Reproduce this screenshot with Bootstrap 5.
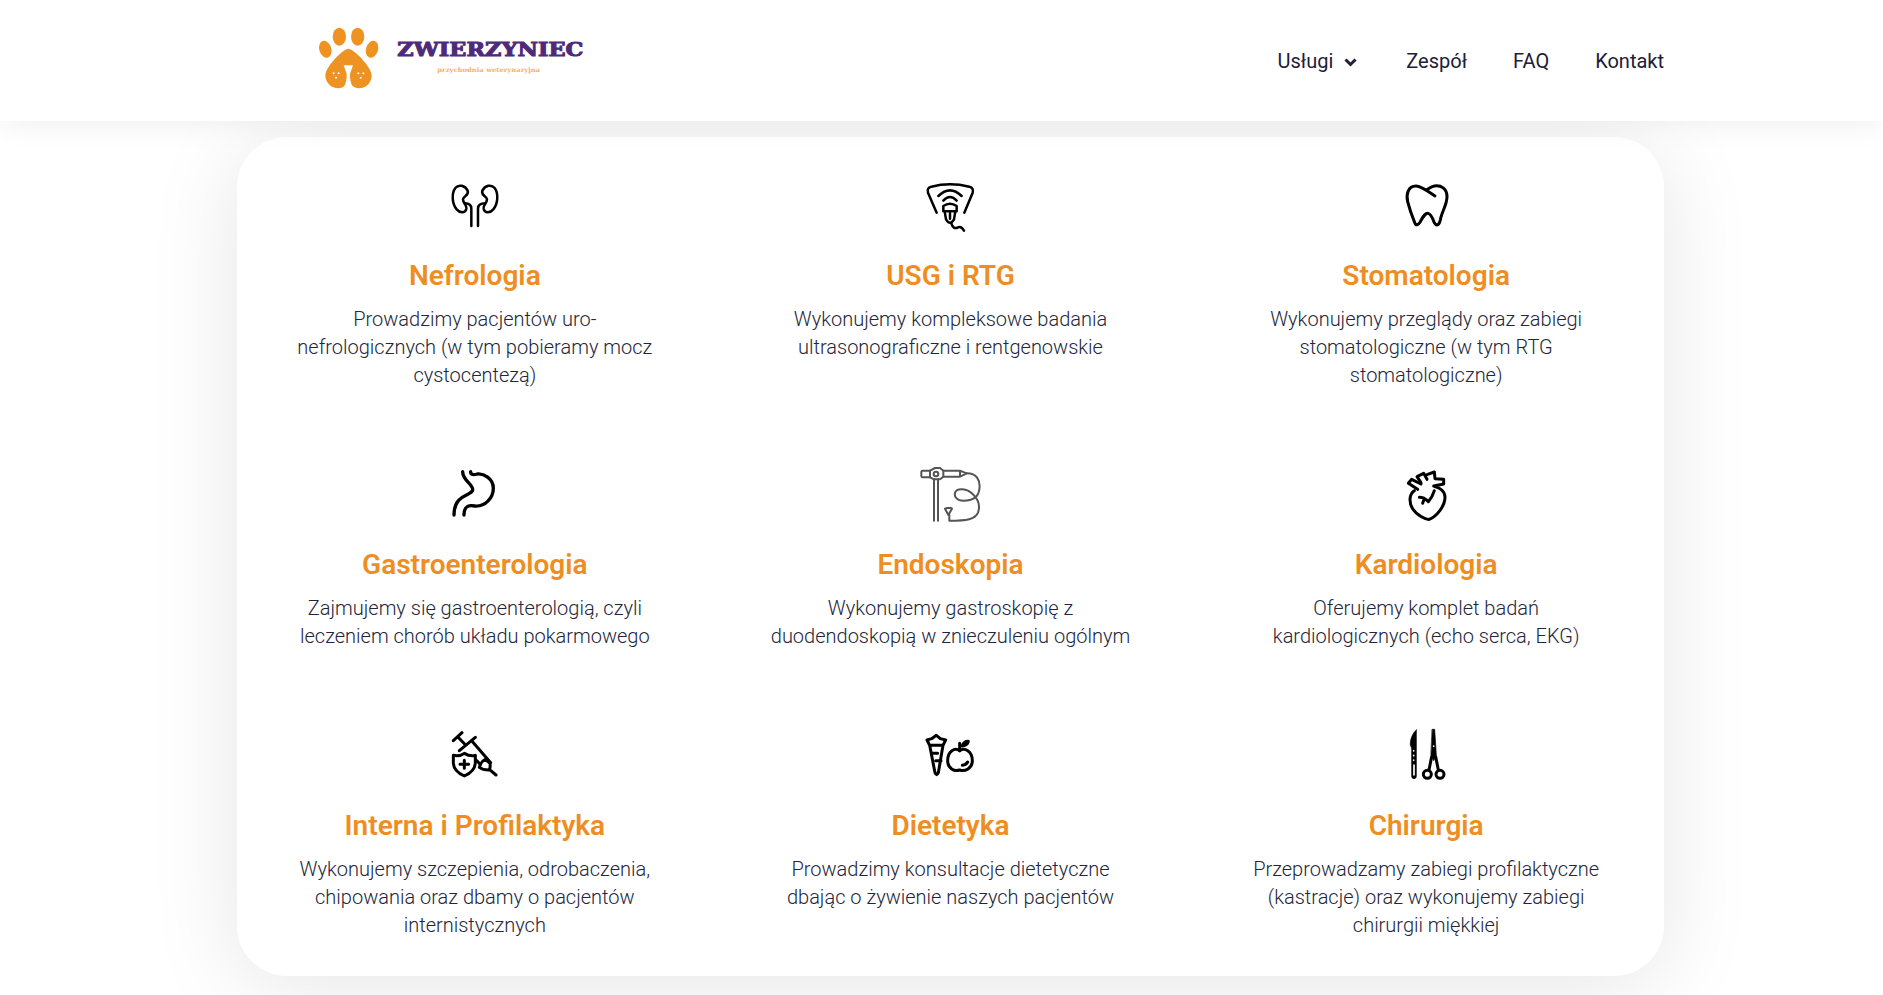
<!DOCTYPE html>
<html lang="pl">
<head>
    <meta charset="UTF-8">
    <meta name="viewport" content="width=device-width, initial-scale=1.0">
    <title>Zwierzyniec</title>
    <link href="https://cdn.jsdelivr.net/npm/bootstrap@5.3.0/dist/css/bootstrap.min.css" rel="stylesheet">
    <style>
        body {
            background: #fff;
            font-family: Roboto, "Liberation Sans", sans-serif;
            color: #23263b;
        }
        .top-bar {
            height: 121px;
            padding: 0;
            box-shadow: 0 0 30px rgba(0, 0, 0, .08);
            position: relative;
            z-index: 2;
        }
        .top-inner {
            margin-left: 290px;
            width: 1374px;
        }
        .top-links {
            gap: 46px;
        }
        .top-bar.navbar .navbar-nav .nav-link {
            font-size: 20px;
            color: #1d2036;
            padding: 0;
            line-height: 24px;
        }
        .chev {
            margin: 0 3px 0 11px;
            vertical-align: 1px;
        }
        .svc-panel {
            margin: 16px 0 20px 237px;
            width: 1427px;
            height: 839px;
            border: 0;
            border-radius: 50px;
            background: #fff;
            box-shadow: 0 10px 90px rgba(0, 0, 0, .1);
            padding-top: 33px;
        }
        .svc-item {
            text-align: center;
            padding: 0 40px;
        }
        .svc-item svg {
            display: block;
            margin: 0 auto;
            fill: none;
            stroke: #000;
            stroke-width: 9;
            stroke-linecap: round;
            stroke-linejoin: round;
        }
        .svc-item svg.ico-thin {
            stroke: #555;
            stroke-width: 6;
        }
        .svc-item svg.ico-fine {
            stroke-width: 7.5;
        }
        .svc-item svg.ico-bold {
            stroke-width: 10;
        }
        .svc-item svg .ico-cut {
            stroke: #fff;
            stroke-width: 5;
        }
        .svc-item svg .ico-solid {
            fill: #000;
            stroke-width: 2;
        }
        .svc-row-a { height: 289px; }
        .svc-row-b { height: 261px; }
        .svc-title {
            font-size: 28px;
            font-weight: 600;
            line-height: 32px;
            color: #ee8e22;
            margin: 20px 0 13px;
        }
        .svc-text {
            font-size: 20px;
            font-weight: 300;
            line-height: 28px;
            margin: 0;
            color: #23263b;
        }
    </style>
</head>
<body>
    <nav class="navbar navbar-expand bg-white top-bar">
        <div class="top-inner d-flex align-items-center justify-content-between">
            <a class="navbar-brand p-0 m-0" href="#">
                <svg width="320" height="120" viewBox="0 0 960 360" class="d-block">
                    <g fill="#ee9322">
                        <ellipse cx="148" cy="107" rx="20" ry="27"/>
                        <ellipse cx="203" cy="107" rx="20" ry="27"/>
                        <ellipse cx="106" cy="145" rx="18" ry="26" transform="rotate(-18 106 145)"/>
                        <ellipse cx="246" cy="145" rx="18" ry="26" transform="rotate(18 246 145)"/>
                        <path d="M175 143C160 143 108 195 106 222C105 245 125 262 145 262C162 262 172 248 175 235C178 248 190 262 207 262C228 262 246 245 245 222C243 195 190 143 175 143Z"/>
                    </g>
                    <path d="M161 193H189L180 218C179 232 182 248 190 262H160C168 248 171 232 170 218Z" fill="#fff"/>
                    <g fill="#fff">
                        <circle cx="131" cy="217" r="3"/><circle cx="146" cy="217" r="3"/><circle cx="138" cy="230" r="3"/>
                        <circle cx="205" cy="217" r="3"/><circle cx="220" cy="217" r="3"/><circle cx="212" cy="230" r="3"/>
                    </g>
                    <text x="322" y="165" font-family="'DejaVu Serif', serif" font-weight="700" font-size="56" fill="#4f2a7a" stroke="#4f2a7a" stroke-width="3" textLength="558" lengthAdjust="spacingAndGlyphs">ZWIERZYNIEC</text>
                    <text x="442" y="212" font-family="'DejaVu Serif', serif" font-weight="700" font-size="19" fill="#f2b06a" textLength="308" lengthAdjust="spacingAndGlyphs">przychodnia weterynaryjna</text>
                </svg>
            </a>
            <ul class="navbar-nav top-links">
                <li class="nav-item"><a class="nav-link" href="#">Usługi<svg class="chev" width="13" height="9" viewBox="0 0 13 9"><path d="M1.5 1.5 6.5 6.5 11.5 1.5" fill="none" stroke="#1d2036" stroke-width="3"/></svg></a></li>
                <li class="nav-item"><a class="nav-link" href="#">Zespół</a></li>
                <li class="nav-item"><a class="nav-link" href="#">FAQ</a></li>
                <li class="nav-item"><a class="nav-link" href="#">Kontakt</a></li>
            </ul>
        </div>
    </nav>

    <div class="card svc-panel">
        <div class="row g-0 svc-row-a">
            <div class="col-4 svc-item">
                <svg class="ico-fine" width="90" height="70" viewBox="0 0 270 210">
                    <path d="M113 62C105 46 86 42 76 54C64 70 66 102 80 118C90 130 106 130 109 116C111 104 99 100 99 88C99 78 118 78 113 62Z"/>
                    <path d="M157 62C165 46 184 42 194 54C206 70 204 102 190 118C180 130 164 130 161 116C159 104 171 100 171 88C171 78 152 78 157 62Z"/>
                    <path d="M104 100Q124 100 124 116V168M166 100Q144 100 144 116V168"/>
                </svg>
                <h3 class="svc-title">Nefrologia</h3>
                <p class="svc-text">Prowadzimy pacjentów uro-<br>nefrologicznych (w tym pobieramy mocz<br>cystocentezą)</p>
            </div>
            <div class="col-4 svc-item">
                <svg class="ico-fine" width="80" height="70" viewBox="0 0 240 210">
                    <path d="M64 50Q120 36 178 50Q192 54 188 68L163 128M64 50Q50 54 54 68L80 128"/>
                    <path d="M85 78Q120 44 155 78M100 92Q120 70 140 92"/>
                    <path d="M100 124V108Q120 94 140 108V124ZM104 124 108 148Q120 168 132 148L136 124M120 130V146"/>
                    <path d="M124 160Q130 180 144 172Q154 168 162 182"/>
                </svg>
                <h3 class="svc-title">USG i RTG</h3>
                <p class="svc-text">Wykonujemy kompleksowe badania<br>ultrasonograficzne i rentgenowskie</p>
            </div>
            <div class="col-4 svc-item">
                <svg width="70" height="70" viewBox="0 0 210 210">
                    <path d="M75 48C50 48 45 75 50 95C55 115 60 130 70 155C75 170 82 165 88 155C95 140 105 130 110 130C118 130 125 145 130 158C137 170 145 165 148 150C152 125 168 105 168 80C168 55 150 45 130 48C118 50 112 58 105 60C95 55 85 48 75 48Z"/>
                    <path d="M105 60 132 78"/>
                </svg>
                <h3 class="svc-title">Stomatologia</h3>
                <p class="svc-text">Wykonujemy przeglądy oraz zabiegi<br>stomatologiczne (w tym RTG<br>stomatologiczne)</p>
            </div>
        </div>
        <div class="row g-0 svc-row-b">
            <div class="col-4 svc-item">
                <svg class="ico-bold" width="70" height="70" viewBox="0 -3 210 210">
                    <path d="M68 35C68 62 100 72 98 90C96 108 42 100 42 165"/>
                    <path d="M72 165C72 135 90 135 105 138C135 140 160 115 160 85C160 55 130 40 112 42C100 45 92 45 92 35"/>
                </svg>
                <h3 class="svc-title">Gastroenterologia</h3>
                <p class="svc-text">Zajmujemy się gastroenterologią, czyli<br>leczeniem chorób układu pokarmowego</p>
            </div>
            <div class="col-4 svc-item">
                <svg class="ico-thin" width="80" height="70" viewBox="0 -3 240 210">
                    <path d="M60 32H38Q34 32 34 36V48Q34 52 38 52H60"/>
                    <path d="M60 32 75 24H90L100 32V50L90 58H72L60 52Z"/>
                    <circle cx="78" cy="42" r="7"/>
                    <path d="M100 32H150L170 40 150 50H100M150 32V50"/>
                    <path d="M72 58V182M84 58V182"/>
                    <path d="M170 40C200 40 212 60 208 88C205 112 185 122 160 122C142 122 130 110 136 96C142 84 170 84 188 102C205 118 212 135 204 158C196 178 170 182 118 182V165"/>
                    <path d="M105 146 112 144H122L126 146 115 165Z"/>
                </svg>
                <h3 class="svc-title">Endoskopia</h3>
                <p class="svc-text">Wykonujemy gastroskopię z<br>duodendoskopią w znieczuleniu ogólnym</p>
            </div>
            <div class="col-4 svc-item">
                <svg width="70" height="70" viewBox="0 -3 210 210">
                    <path d="M70 92C54 102 54 128 64 145C76 165 105 180 115 178C135 170 162 140 162 112C162 95 148 84 132 80"/>
                    <path d="M80 88 52 70 62 58 90 72"/>
                    <path d="M90 68 78 50 98 40 108 58M108 44 130 36 132 56 158 58 158 72 128 78"/>
                    <path d="M85 112Q100 112 112 125M100 115 95 130M130 92Q125 110 112 125 118 145M118 135 134 128"/>
                </svg>
                <h3 class="svc-title">Kardiologia</h3>
                <p class="svc-text">Oferujemy komplet badań<br>kardiologicznych (echo serca, EKG)</p>
            </div>
        </div>
        <div class="row g-0">
            <div class="col-4 svc-item">
                <svg width="70" height="70" viewBox="0 0 210 210">
                    <path d="M40 106Q60 110 73 100Q90 110 106 106V130Q104 154 73 168Q42 154 40 130Z"/>
                    <path d="M73 121V145M60 133H86"/>
                    <path d="M40 62 66 38M53 50 76 74M58 92 106 52M95 62 152 128M110 122 120 132"/>
                    <path d="M118 142Q122 124 136 118L150 130Q152 146 146 150Q128 150 118 142ZM148 148 168 165"/>
                </svg>
                <h3 class="svc-title">Interna i Profilaktyka</h3>
                <p class="svc-text">Wykonujemy szczepienia, odrobaczenia,<br>chipowania oraz dbamy o pacjentów<br>internistycznych</p>
            </div>
            <div class="col-4 svc-item">
                <svg width="70" height="70" viewBox="0 0 210 210">
                    <path d="M36 60 50 56 64 46 76 56 92 60 84 76H44ZM44 76 60 158Q65 170 70 158L84 76"/>
                    <path d="M50 100H68M62 122H78"/>
                    <path d="M134 92C120 82 98 92 98 122C98 145 118 156 134 150C150 156 172 145 172 122C172 92 148 82 134 92Z"/>
                    <path d="M134 92V70M142 78Q146 64 160 64Q158 76 142 78ZM142 136Q154 134 158 126"/>
                </svg>
                <h3 class="svc-title">Dietetyka</h3>
                <p class="svc-text">Prowadzimy konsultacje dietetyczne<br>dbając o żywienie naszych pacjentów</p>
            </div>
            <div class="col-4 svc-item">
                <svg width="70" height="70" viewBox="0 0 210 210">
                    <path class="ico-solid" d="M76 30C64 40 57 60 58 76L62 84V168Q62 176 69 176Q76 176 76 168V30Z"/>
                    <path class="ico-cut" d="M69 135V165M68 92V93M68 106V107M68 120V121"/>
                    <path class="ico-solid" d="M124 28H131L136 105 128 122 120 105Z"/>
                    <path d="M122 110 114 150M134 110 142 150"/>
                    <circle cx="109" cy="163" r="12"/>
                    <circle cx="147" cy="163" r="12"/>
                    <path class="ico-cut" d="M128 78V79"/>
                </svg>
                <h3 class="svc-title">Chirurgia</h3>
                <p class="svc-text">Przeprowadzamy zabiegi profilaktyczne<br>(kastracje) oraz wykonujemy zabiegi<br>chirurgii miękkiej</p>
            </div>
        </div>
    </div>

    <script src="https://cdn.jsdelivr.net/npm/bootstrap@5.3.0/dist/js/bootstrap.bundle.min.js"></script>
</body>
</html>
